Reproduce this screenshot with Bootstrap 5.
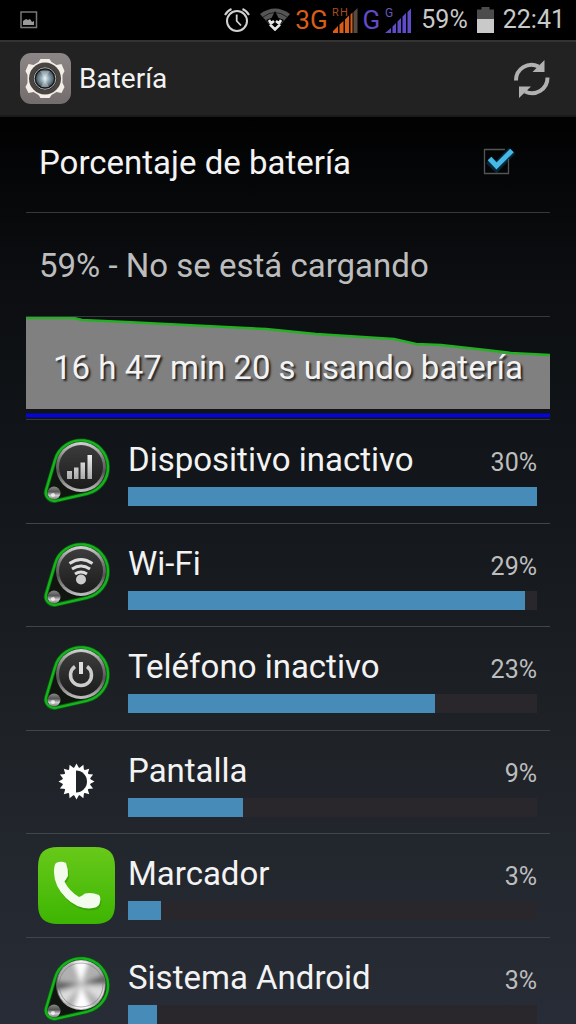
<!DOCTYPE html>
<html lang="es">
<head>
<meta charset="utf-8">
<meta name="viewport" content="width=device-width, initial-scale=1">
<title>Batería</title>
<link rel="stylesheet" href="https://cdn.jsdelivr.net/npm/bootstrap@5.3.0/dist/css/bootstrap.min.css">
<style>
  body { font-family: Roboto, "Noto Sans", sans-serif; color: #f3f3f3; background: #000; }
  .screen { background: linear-gradient(#000 100px, #0b0d10 270px, #13171b 500px, #1f2328 750px, #282c36 100%); }
  .statusbar { height: 40px; background: #000; color: #c9c9c9; font-size: 25px; line-height: 40px; padding: 0 11px 0 20px; }
  .statusbar svg, .appbar svg, .usage svg { display: block; flex: none; }
  .statusbar .gap-wide { gap: 9px; }
  .net { font-size: 26px; }
  .net-3g { color: #d85d17; }
  .net-g { color: #604cc8; }
  .appbar { height: 77px; background: #222; border-top: 2px solid #333; border-bottom: 2px solid #1a1a1a; padding: 0 26px 0 20px; }
  .appbar h1 { font-size: 28px; line-height: 40px; font-weight: 400; }
  .content { padding: 0 26px; }
  .pref, .state { border-bottom: 1px solid #36383a; font-size: 33px; line-height: 40px; padding: 0 13px; }
  .pref { height: 96px; padding: 0 34px 4px 13px; }
  .state { height: 104px; padding-top: 2px; color: #bdbdbd; }
  .tick { appearance: none; width: 36px; height: 36px; margin: 0 0 4px; border: 0; background: url("data:image/svg+xml,%3Csvg xmlns='http://www.w3.org/2000/svg' viewBox='0 0 36 36'%3E%3Cpath d='M25 6.500H4.500V30.500H28.500V16' fill='none' stroke='%23555' stroke-width='1.300'/%3E%3Cpath d='M9 17l7.500 7L32 7.500' fill='none' stroke='%230a5a80' stroke-opacity='.4' stroke-width='9'/%3E%3Cpath d='M9.500 15.500l7 7.500L32 7.500' fill='none' stroke='%2345b9e8' stroke-width='5'/%3E%3C/svg%3E") center/contain no-repeat; }
  .chart { height: 103px; border-bottom: 1px solid #36383a; }
  .chart svg { display: block; width: 100%; height: 102px; }
  .chart p { top: 0; left: 0; right: 0; font-size: 33px; line-height: 40px; padding-top: 31px; text-shadow: 2px 2px 2px #222; white-space: nowrap; }
  .usage li { height: 104px; border-bottom: 1px solid #41454a; padding: 13px 13px 0 12px; gap: 13px; }
  .usage li:nth-child(even) { height: 103px; }
  .usage h2 { font-size: 33px; line-height: 40px; font-weight: 400; }
  .usage .pct { font-size: 25px; line-height: 32px; color: #bdbdbd; }
  .usage .body { padding-top: 7px; }
  .usage .progress { height: 19px; margin-top: 7px; border-radius: 0; background: #29262c; }
  .usage .progress-bar { background: #478cb9; }
</style>
</head>
<body>
<svg width="0" height="0" class="position-absolute" aria-hidden="true">
  <defs>
    <linearGradient id="rim" x1="0" y1="0" x2="0" y2="1"><stop offset="0" stop-color="#d5d5d5"/><stop offset=".35" stop-color="#777"/><stop offset=".6" stop-color="#555"/><stop offset="1" stop-color="#c4c4c4"/></linearGradient>
    <linearGradient id="face" x1="0" y1="0" x2="0" y2="1"><stop offset="0" stop-color="#3c3c3c"/><stop offset="1" stop-color="#1b1b1b"/></linearGradient>
    <linearGradient id="glyph" x1="0" y1="0" x2="0" y2="1"><stop offset="0" stop-color="#eee"/><stop offset="1" stop-color="#aaa"/></linearGradient>
    <linearGradient id="ball" x1="0" y1="0" x2="0" y2="1"><stop offset="0" stop-color="#888"/><stop offset=".4" stop-color="#555"/><stop offset=".7" stop-color="#ccc"/><stop offset="1" stop-color="#777"/></linearGradient>
    <linearGradient id="call" x1="0" y1="0" x2="0" y2="1"><stop offset="0" stop-color="#68c91a"/><stop offset="1" stop-color="#3db502"/></linearGradient>
    <filter id="soft"><feGaussianBlur stdDeviation="2.500"/></filter>
    <clipPath id="disc"><circle cx="43" cy="34" r="24"/></clipPath>
    <symbol id="knob" viewBox="0 0 77 77">
      <path d="M17 27.200A27 27 0 1 1 48.700 60.800L17.800 67.800A8.500 8.500 0 0 1 8 57.500Z" fill="#101510" stroke="#0b5a10" stroke-width="4"/>
      <path d="M17 27.200A27 27 0 1 1 48.700 60.800L17.800 67.800A8.500 8.500 0 0 1 8 57.500Z" fill="none" stroke="#16b41c" stroke-width="2.400"/>
      <circle cx="43" cy="34" r="25" fill="url(#rim)"/>
      <circle cx="16" cy="60" r="6.500" fill="url(#ball)"/><circle cx="15" cy="62" r="2" fill="#fff" opacity=".7"/>
    </symbol>
  </defs>
</svg>

<div class="screen vh-100 d-flex flex-column overflow-hidden">
  <div class="statusbar d-flex align-items-center flex-shrink-0">
    <svg width="18" height="18" viewBox="0 0 18 18"><rect x="1" y="1" width="15.500" height="15.500" fill="none" stroke="#777" stroke-width="1.500"/><path d="M3 14V10l3-2 2 1 2-1 2 3 2-1v4z" fill="#999"/></svg>
    <svg class="ms-auto" width="28" height="28" viewBox="0 0 28 28" fill="none" stroke="#d2d2d2"><circle cx="14" cy="15" r="10" stroke-width="2"/><path d="M13.700 8.500V15l4.300 4.500" stroke-width="1.800"/><path d="M2 9Q4 5 8.500 3M26 9Q24 5 19.500 3" stroke-width="2"/></svg>
    <svg class="ms-2" width="32" height="26" viewBox="0 0 32 26"><path d="M1 7Q16-4 31 7L16 24z" fill="#555"/><path d="M4 10Q16 1 28 10" fill="none" stroke="#222" stroke-width="1"/><path d="M16 4l-4 8h8z" fill="#000"/><path d="M7 13q9-5 18 0l-9 10z" fill="#000"/><path d="M10 13l2 3.500 3-2.500M22 13l-2 3.500-3-2.500M11 17.500l5 5 5-5" fill="none" stroke="#e6e6e6" stroke-width="2.600"/></svg>
    <span class="net net-3g ms-1">3G</span>
    <svg class="ms-1" width="27" height="28" viewBox="0 0 27 28"><text x="0" y="10" font-size="11" fill="#a64c20">R</text><text x="8" y="10" font-size="11" fill="#a64c20">H</text><path d="M1 27v-2l5-5v7zM7.500 27V18.500l4-3.500v12zM13 27V13.500l4-4V27zM18.500 27V8.500l2-2V27z" fill="#d85d17"/><path d="M21.500 27V6l4-4v25z" fill="#554b43"/></svg>
    <span class="net net-g ms-1">G</span>
    <svg class="ms-1" width="29" height="28" viewBox="0 0 29 28"><text x="1" y="11" font-size="12" fill="#6658b8">G</text><path d="M1 27l6-5v5zM8.500 27v-6.500l3.500-3.500v10zM13.500 27V15.500l3.500-3.500v15zM18.500 27V10.500L22 7v20zM23.500 27V6L27 2.500V27z" fill="#604cc8"/></svg>
    <div class="gap-wide d-flex align-items-center ms-2">
      <span>59%</span>
      <svg width="17" height="26" viewBox="0 0 17 26"><path d="M4.500 0h8v2.500H17V12H0V2.500h4.500z" fill="#4c4c4c"/><path d="M0 12h17v14H0z" fill="#c9c9c9"/></svg>
      <span>22:41</span>
    </div>
  </div>

  <header class="appbar d-flex align-items-center flex-shrink-0">
    <svg width="51" height="51" viewBox="0 0 51 51"><defs><linearGradient id="tile" x1="0" y1="0" x2="0" y2="1"><stop offset="0" stop-color="#8d8686"/><stop offset="1" stop-color="#746d6d"/></linearGradient><radialGradient id="lens"><stop offset="0" stop-color="#eef5f8"/><stop offset=".5" stop-color="#8ba1ad"/><stop offset="1" stop-color="#43515b"/></radialGradient></defs>
      <rect width="51" height="51" rx="11" fill="url(#tile)"/>
      <path d="M20.500 6h9l2 3 5 3 5-1 3 7-2 4v8l2 4-3 6-5-1-5 3-2 3h-9l-2-3-5-3-5 1-3-6 2-4v-8l-2-4 3-7 5 1 5-3z" fill="#f3eee8"/>
      <circle cx="25" cy="25.500" r="16" fill="#4a4441"/><circle cx="25" cy="25.500" r="11.500" fill="#171717"/><circle cx="25" cy="25.500" r="10.800" fill="none" stroke="#aab4ba"/><circle cx="25" cy="25.500" r="9" fill="url(#lens)"/><path d="M25 26l-5-8h10zM25 26l-4 8h8z" fill="#fff" opacity=".3"/></svg>
    <h1 class="m-0 ms-2">Batería</h1>
    <button type="button" class="btn p-0 border-0 ms-auto" aria-label="Actualizar"><svg width="37" height="40" viewBox="0 0 37 40"><path d="M3 21.500A15.500 15.500 0 0 1 25.500 7.500" fill="none" stroke="#b1b1b1" stroke-width="4"/><path d="M31.500 1v12H19.500z" fill="#b1b1b1"/><path d="M34.500 18.500A15.500 15.500 0 0 1 12 32.500" fill="none" stroke="#b1b1b1" stroke-width="4"/><path d="M6 39V27.500h12z" fill="#b1b1b1"/></svg></button>
  </header>

  <main class="content flex-grow-1 overflow-hidden">
    <div class="pref d-flex align-items-center justify-content-between">
      <label for="percent">Porcentaje de batería</label>
      <input class="tick" type="checkbox" id="percent" checked>
    </div>
    <div class="state d-flex align-items-center">59% - No se está cargando</div>
    <div class="chart position-relative">
      <svg viewBox="0 0 524 102" preserveAspectRatio="none"><path d="M0 1H48L56 3 100 5 160 8 240 12 290 17 368 22 390 27 415 28 460 33 485 36 524 38V92H0z" fill="#808080"/><path d="M0 1H48L56 3 100 5 160 8 240 12 290 17 368 22 390 27 415 28 460 33 485 36 524 38" fill="none" stroke="#23b023" stroke-width="2.500"/><path d="M0 98.500H524" stroke="#0505d4" stroke-width="4"/></svg>
      <p class="position-absolute m-0 text-center">16 h 47 min 20 s usando batería</p>
    </div>

    <ul class="usage list-unstyled m-0">
      <li class="d-flex">
        <svg width="77" height="77" viewBox="0 0 77 77"><use href="#knob"/><circle cx="43" cy="34" r="22" fill="url(#face)"/><path d="M29 38h5v8h-5zM36 34.500h4.500V46H36zM42.500 29.500H47V46h-4.500zM49.500 22h4.500v24h-4.500z" fill="url(#glyph)"/></svg>
        <div class="body flex-grow-1"><div class="d-flex justify-content-between align-items-baseline"><h2 class="m-0">Dispositivo inactivo</h2><span class="pct">30%</span></div><div class="progress"><div class="progress-bar" style="width:100%"></div></div></div>
      </li>
      <li class="d-flex">
        <svg width="77" height="77" viewBox="0 0 77 77"><use href="#knob"/><circle cx="43" cy="34" r="22" fill="url(#face)"/><g fill="none" stroke="#dcdcdc" stroke-width="3"><path d="M31.500 26.500q11.500-8 23 0M34 32q9-6 18 0M37 37q6-4 12 0"/></g><circle cx="43" cy="42.500" r="5" fill="#ccc"/></svg>
        <div class="body flex-grow-1"><div class="d-flex justify-content-between align-items-baseline"><h2 class="m-0">Wi-Fi</h2><span class="pct">29%</span></div><div class="progress"><div class="progress-bar" style="width:97%"></div></div></div>
      </li>
      <li class="d-flex">
        <svg width="77" height="77" viewBox="0 0 77 77"><use href="#knob"/><circle cx="43" cy="34" r="22" fill="url(#face)"/><path d="M37 26.500A10.500 10.500 0 1 0 49 26.500" fill="none" stroke="#ccc" stroke-width="3.500"/><path d="M43 22v12" stroke="#ddd" stroke-width="4"/></svg>
        <div class="body flex-grow-1"><div class="d-flex justify-content-between align-items-baseline"><h2 class="m-0">Teléfono inactivo</h2><span class="pct">23%</span></div><div class="progress"><div class="progress-bar" style="width:75%"></div></div></div>
      </li>
      <li class="d-flex">
        <svg width="77" height="77" viewBox="0 -2.500 77 77"><circle cx="38.500" cy="35" r="14" fill="#fff"/><g fill="#fff"><path id="ray" d="M35.500 22.500l3-5.500 3 5.500zM35.500 47.500l3 5.500 3-5.500z"/><use href="#ray" transform="rotate(22.500 38.500 35)"/><use href="#ray" transform="rotate(45 38.500 35)"/><use href="#ray" transform="rotate(67.500 38.500 35)"/><use href="#ray" transform="rotate(90 38.500 35)"/><use href="#ray" transform="rotate(112.500 38.500 35)"/><use href="#ray" transform="rotate(135 38.500 35)"/><use href="#ray" transform="rotate(157.500 38.500 35)"/></g><path d="M38 24a11 11 0 0 1 0 22z" fill="#202429"/></svg>
        <div class="body flex-grow-1"><div class="d-flex justify-content-between align-items-baseline"><h2 class="m-0">Pantalla</h2><span class="pct">9%</span></div><div class="progress"><div class="progress-bar" style="width:28%"></div></div></div>
      </li>
      <li class="d-flex">
        <svg width="77" height="77" viewBox="0 0 77 77"><path d="M20 0H57C71 0 77 6 77 20V57C77 71 71 77 57 77H20C6 77 0 71 0 57V20C0 6 6 0 20 0z" fill="url(#call)"/><path d="M18 16Q23 13.500 28 16Q30.500 22 30 29Q28 32.500 26.500 34.500Q31 44 41 50Q44 49 47 46.500Q54 45 61 48Q63.500 51 61.500 57Q60 61 51 61.500Q38 61 28 51Q16 39 16 25Q16 18 18 16z" fill="#2c8a03" opacity=".5" transform="translate(1 2)"/><path d="M18 16Q23 13.500 28 16Q30.500 22 30 29Q28 32.500 26.500 34.500Q31 44 41 50Q44 49 47 46.500Q54 45 61 48Q63.500 51 61.500 57Q60 61 51 61.500Q38 61 28 51Q16 39 16 25Q16 18 18 16z" fill="#f3fcec"/></svg>
        <div class="body flex-grow-1"><div class="d-flex justify-content-between align-items-baseline"><h2 class="m-0">Marcador</h2><span class="pct">3%</span></div><div class="progress"><div class="progress-bar" style="width:8%"></div></div></div>
      </li>
      <li class="d-flex">
        <svg width="77" height="77" viewBox="0 0 77 77"><use href="#knob"/><g clip-path="url(#disc)"><circle cx="43" cy="34" r="24" fill="#b0b0b0"/><g filter="url(#soft)"><path d="M43 34L34 6h18zM43 34L33 64h24z" fill="#fff"/><path d="M43 34L14 30v10zM43 34l28-12v10z" fill="#5c5c5c"/><path d="M43 34L14 44l8 14zM43 34l28 2-6 16z" fill="#ddd"/></g></g><circle cx="43" cy="34" r="22" fill="none" stroke="#777" stroke-opacity=".6"/></svg>
        <div class="body flex-grow-1"><div class="d-flex justify-content-between align-items-baseline"><h2 class="m-0">Sistema Android</h2><span class="pct">3%</span></div><div class="progress"><div class="progress-bar" style="width:7%"></div></div></div>
      </li>
    </ul>
  </main>
</div>
<script src="https://cdn.jsdelivr.net/npm/bootstrap@5.3.0/dist/js/bootstrap.bundle.min.js"></script>
</body>
</html>
